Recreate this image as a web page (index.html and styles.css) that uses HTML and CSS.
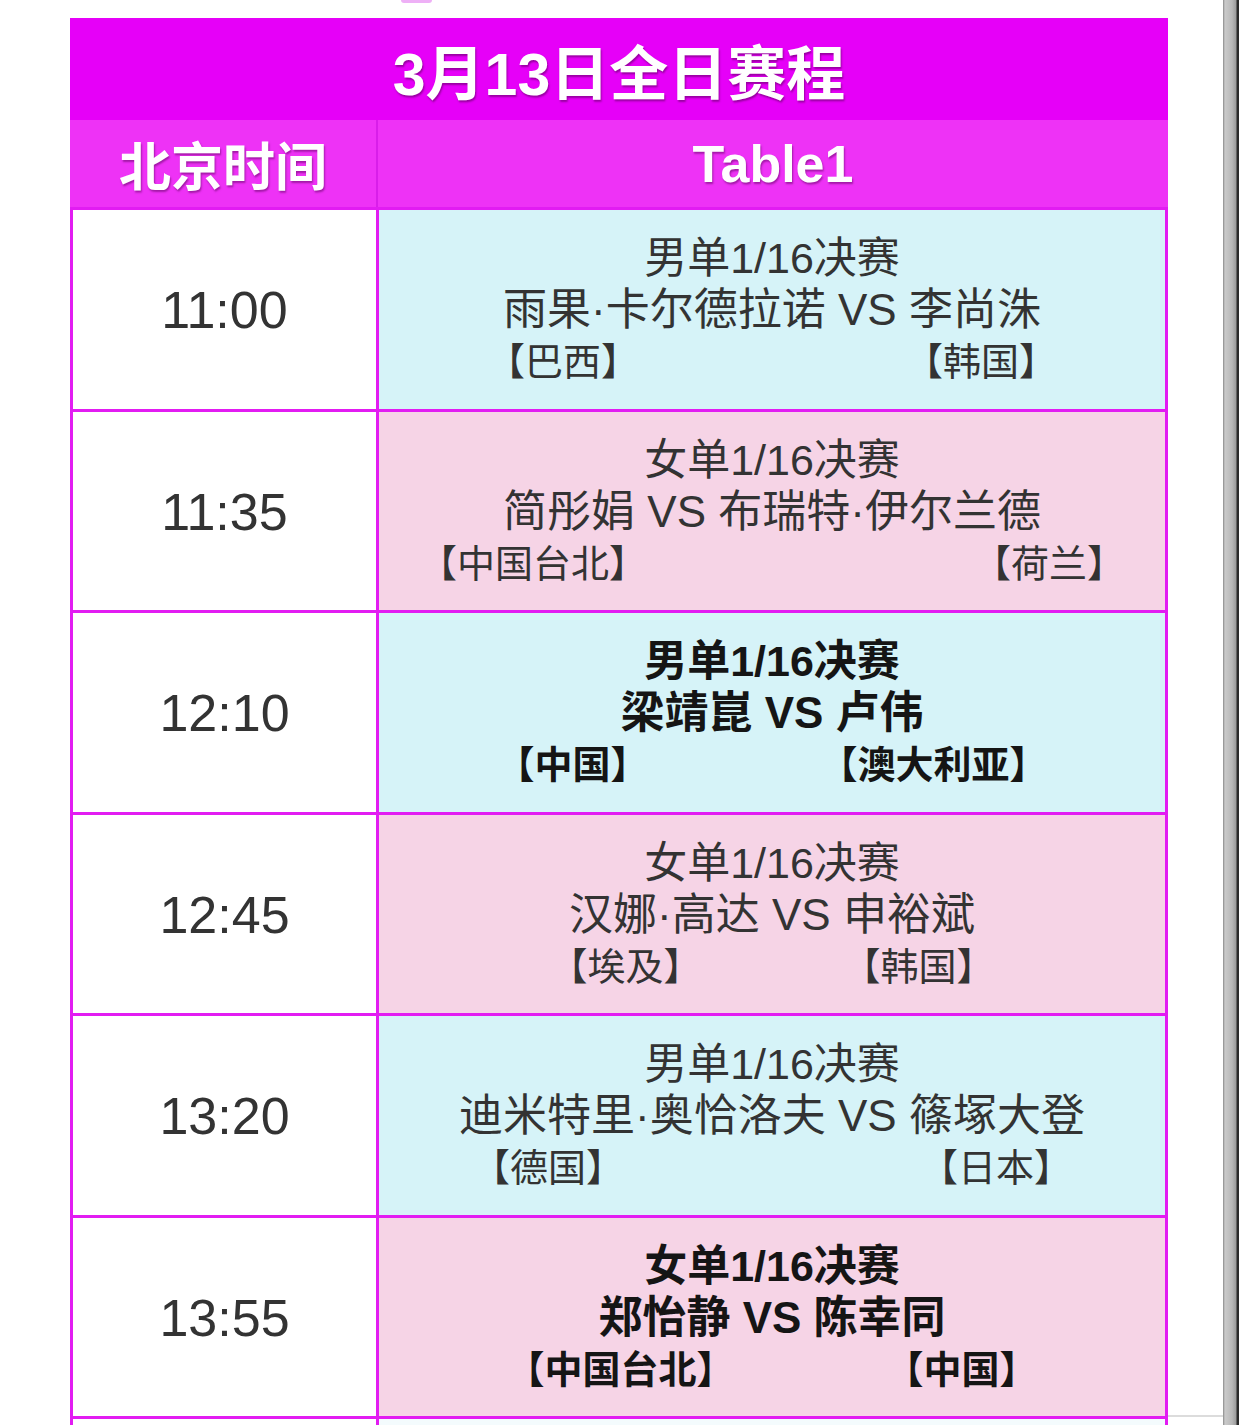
FILE: index.html
```html
<!DOCTYPE html>
<html lang="zh-CN">
<head>
<meta charset="utf-8">
<title>3月13日全日赛程</title>
<link rel="stylesheet" href="styles.css">
</head>
<body>
<div class="page">
  <div class="main">
    <div class="top"><span class="blob"></span></div>
    <div class="sched">
      <div class="title">3月13日全日赛程</div>
      <div class="head">
        <div class="hcell hcell-time">北京时间</div>
        <div class="hcell">Table1</div>
      </div>
      <div class="rows">
        <div class="time">11:00</div>
        <div class="match blue">
          <div class="event">男单1/16决赛</div>
          <div class="names">雨果·卡尔德拉诺 VS 李尚洙</div>
          <div class="nations g1"><span>【巴西】</span><span>【韩国】</span></div>
        </div>

        <div class="time">11:35</div>
        <div class="match pink">
          <div class="event">女单1/16决赛</div>
          <div class="names">简彤娟 VS 布瑞特·伊尔兰德</div>
          <div class="nations g2"><span>【中国台北】</span><span>【荷兰】</span></div>
        </div>

        <div class="time">12:10</div>
        <div class="match blue bold">
          <div class="event">男单1/16决赛</div>
          <div class="names">梁靖崑 VS 卢伟</div>
          <div class="nations g3"><span>【中国】</span><span>【澳大利亚】</span></div>
        </div>

        <div class="time">12:45</div>
        <div class="match pink">
          <div class="event">女单1/16决赛</div>
          <div class="names">汉娜·高达 VS 申裕斌</div>
          <div class="nations g4"><span>【埃及】</span><span>【韩国】</span></div>
        </div>

        <div class="time">13:20</div>
        <div class="match blue">
          <div class="event">男单1/16决赛</div>
          <div class="names">迪米特里·奥恰洛夫 VS 篠塚大登</div>
          <div class="nations g5"><span>【德国】</span><span>【日本】</span></div>
        </div>

        <div class="time">13:55</div>
        <div class="match pink bold">
          <div class="event">女单1/16决赛</div>
          <div class="names">郑怡静 VS 陈幸同</div>
          <div class="nations g6"><span>【中国台北】</span><span>【中国】</span></div>
        </div>

        <div class="time"></div>
        <div class="match blank"></div>
      </div>
    </div>
  </div>
  <div class="gutter"><div class="gutter-line"></div></div>
  <div class="scrollbar"></div>
</div>
</body>
</html>
```
FILE: styles.css
```css
html, body {
  margin: 0;
  padding: 0;
  overflow: hidden;
  background: #ffffff;
}

body {
  font-family: "Liberation Sans", "Noto Sans CJK SC", sans-serif;
  color: #333333;
}

.page {
  display: flex;
  width: 1242px;
  height: 1425px;
}

.main {
  width: 1168px;
  flex: none;
}

.top {
  height: 18px;
  padding-left: 401px;
  box-sizing: border-box;
}

.blob {
  display: block;
  width: 31px;
  height: 3px;
  background: #eeb0f6;
  border-radius: 0 0 16px 16px;
}

.sched {
  margin-left: 70px;
  width: 1098px;
}

.title {
  height: 102px;
  background: #e600f8;
  color: #ffffff;
  font-weight: bold;
  font-size: 59px;
  display: flex;
  align-items: center;
  justify-content: center;
  text-shadow: 1px 2px 2px rgba(90, 0, 90, 0.55);
}

.head {
  display: grid;
  grid-template-columns: 308px 1fr;
  height: 87px;
  background: #ee32f6;
}

.hcell {
  display: flex;
  align-items: center;
  justify-content: center;
  color: #ffffff;
  font-weight: bold;
  font-size: 52px;
  text-shadow: 1px 2px 2px rgba(90, 0, 90, 0.5);
}

.hcell-time {
  border-right: 2px solid #d91ee9;
}

.rows {
  display: grid;
  grid-template-columns: 303px 1fr;
  grid-auto-rows: 198.5px;
  gap: 3px;
  padding: 3px 3px 0 3px;
  background: #e21cf2;
}

.time {
  background: #ffffff;
  display: flex;
  align-items: center;
  justify-content: center;
  font-size: 52px;
  color: #333333;
  padding-top: 2px;
}

.match {
  display: flex;
  flex-direction: column;
  align-items: center;
  justify-content: center;
  text-align: center;
  color: #333333;
  padding-top: 3px;
  box-sizing: border-box;
}

.blue { background: #d6f3f8; }
.pink { background: #f6d4e6; }
.blank { background: #f4fbfd; }

.bold {
  font-weight: bold;
  color: #151515;
}

.event {
  font-size: 43px;
  line-height: 51px;
  white-space: nowrap;
}

.names {
  font-size: 44px;
  line-height: 52px;
  white-space: nowrap;
}

.nations {
  display: flex;
  justify-content: center;
  font-size: 38px;
  line-height: 52px;
  white-space: nowrap;
}

.g1 { gap: 266px; }
.g2 { gap: 326px; }
.g3 { gap: 171px; }
.g4 { gap: 141px; }
.g5 { gap: 296px; }
.g6 { gap: 151px; }

.gutter {
  width: 55px;
  flex: none;
}

.gutter-line {
  height: 1415px;
  border-bottom: 2px solid #dcdcdc;
}

.scrollbar {
  width: 16px;
  height: 1425px;
  flex: none;
  background: linear-gradient(to right, #8a8a8a 0, #cacaca 2px, #b8b8b8 9px, #9c9c9c 13px, #2a2a2a 14px, #2a2a2a 16px);
}
```
